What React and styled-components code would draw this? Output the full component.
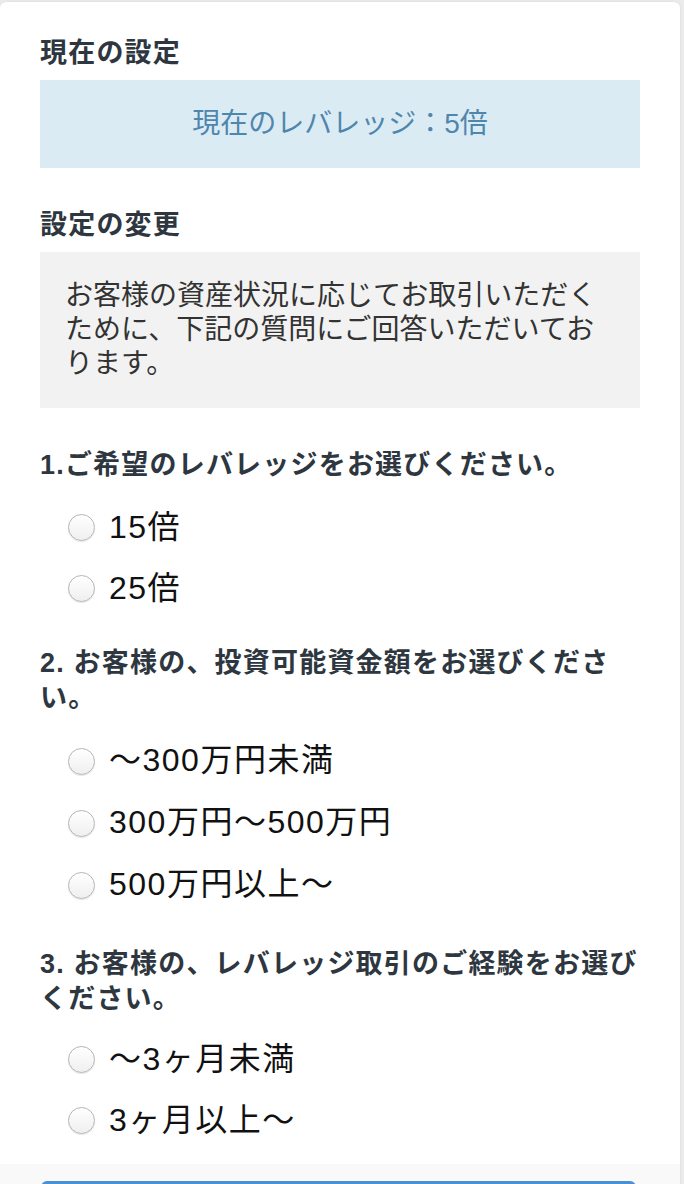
import React from "react";
import styled, { createGlobalStyle } from "styled-components";

const Global = createGlobalStyle`
  html, body { margin: 0; padding: 0; background: #ebebeb; }
  body { font-family: "Liberation Sans", "Noto Sans CJK JP", sans-serif; }
  * { box-sizing: border-box; }
`;

const Page = styled.div`
  padding: 2px 4px 0 0;
  min-height: 1184px;
`;

const Card = styled.div`
  background: #fff;
  border-radius: 6px;
  box-shadow: 0 0 3px rgba(0, 0, 0, 0.08);
  overflow: hidden;
`;

const Body = styled.div`
  padding: 34px 40px 17px 40px;
`;

const Heading = styled.h2`
  margin: ${(p) => p.$mt || 0}px 0 ${(p) => p.$mb || 0}px;
  font-size: 27px;
  line-height: 35px;
  letter-spacing: 1.2px;
  font-weight: bold;
  color: #2e3740;
`;

const InfoBox = styled.div`
  margin-top: 9px;
  background: #dbebf4;
  color: #4f86ad;
  text-align: center;
  font-size: 28px;
  line-height: 36px;
  padding: 26px 0;
`;

const NoteBox = styled.div`
  margin-top: 9px;
  background: #f2f2f2;
  color: #333;
  font-size: 28px;
  line-height: 34px;
  padding: 27px 26px 27px 25px;
`;

const Question = styled.div`
  margin-top: ${(p) => p.$mt}px;
`;

const Options = styled.div`
  margin-top: ${(p) => p.$mt || 10}px;
  display: flex;
  flex-direction: column;
`;

const Option = styled.label`
  display: flex;
  align-items: center;
  height: ${(p) => p.$h || 61}px;
  padding-left: 28px;
  gap: 14px;
  font-size: 32px;
  letter-spacing: 1.5px;
  color: #111;
  cursor: pointer;
`;

const Radio = styled.input.attrs({ type: "radio" })`
  appearance: none;
  -webkit-appearance: none;
  margin: 8px 0 0 0;
  width: 27px;
  height: 27px;
  border-radius: 50%;
  border: 1px solid #b5b5b5;
  background: linear-gradient(#ffffff, #efefef);
  box-shadow: inset 0 1px 1px rgba(255, 255, 255, 0.9), 0 1px 1px rgba(0, 0, 0, 0.1);
  flex: none;
`;

const Footer = styled.div`
  background: #f9f9f9;
  padding: 17px 44px 30px 41px;
`;

const Button = styled.button`
  width: 100%;
  height: 64px;
  border: none;
  border-radius: 6px;
  background: #4a90d6;
  color: #fff;
  font-family: inherit;
  font-size: 28px;
  font-weight: bold;
  padding-top: 24px;
`;

const questions = [
  {
    title: "1.ご希望のレバレッジをお選びください。",
    name: "lev",
    mt: 40,
    optMt: 10,
    options: ["15倍", "25倍"],
  },
  {
    title: "2. お客様の、投資可能資金額をお選びください。",
    name: "fund",
    mt: 31,
    optMt: 10,
    h: 62,
    options: ["〜300万円未満", "300万円〜500万円", "500万円以上〜"],
  },
  {
    title: "3. お客様の、レバレッジ取引のご経験をお選びください。",
    name: "exp",
    mt: 35,
    optMt: 8,
    options: ["〜3ヶ月未満", "3ヶ月以上〜"],
  },
];

export default function App() {
  return (
    <Page>
      <Global />
      <Card>
        <Body>
          <Heading>現在の設定</Heading>
          <InfoBox>現在のレバレッジ：5倍</InfoBox>
          <Heading $mt={40}>設定の変更</Heading>
          <NoteBox>
            お客様の資産状況に応じてお取引いただくために、下記の質問にご回答いただいております。
          </NoteBox>
          {questions.map((q) => (
            <Question key={q.name} $mt={q.mt}>
              <Heading>{q.title}</Heading>
              <Options $mt={q.optMt}>
                {q.options.map((o) => (
                  <Option key={o} $h={q.h}>
                    <Radio name={q.name} />
                    <span>{o}</span>
                  </Option>
                ))}
              </Options>
            </Question>
          ))}
        </Body>
        <Footer>
          <Button>設定を変更する</Button>
        </Footer>
      </Card>
    </Page>
  );
}
